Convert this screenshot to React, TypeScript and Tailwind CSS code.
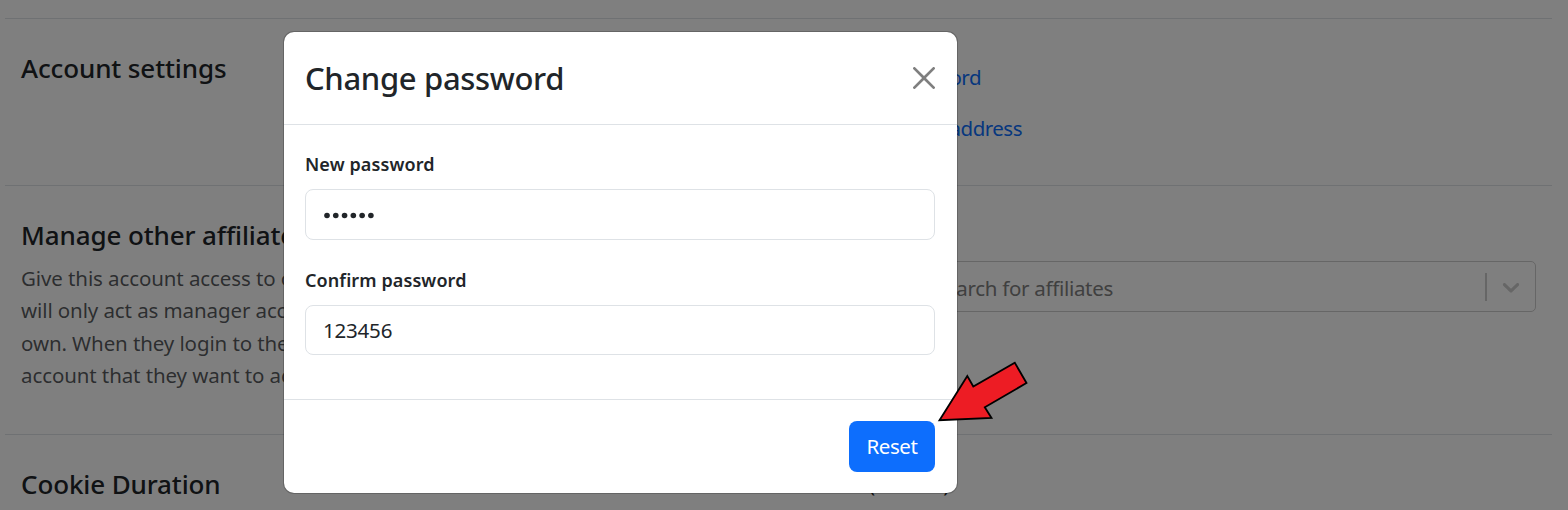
import type { ReactNode } from "react";

function Section({ title, height, description, children }: {
  title: string;
  height: string;
  description?: string[];
  children: ReactNode;
}) {
  return (
    <section className={`flex border-t border-[#dee2e6] pl-4 pr-4 pt-[33px] ${height}`}>
      <div className="w-[799px] shrink-0">
        <h2 className="text-[26px] font-medium leading-8 tracking-[-0.12px]">{title}</h2>
        {description && (
          <p className="mt-[11px] whitespace-nowrap text-[20.5px] leading-[32.3px] tracking-[-0.1px] text-[#212529]/75">
            {description.map((line) => (
              <span key={line} className="block">{line}</span>
            ))}
          </p>
        )}
      </div>
      <div className="flex-1">{children}</div>
    </section>
  );
}

function PasswordField({ label, className, children }: {
  label: string;
  className: string;
  children: ReactNode;
}) {
  return (
    <div>
      <div className="text-[18px] font-semibold leading-6 tracking-[0.1px]">{label}</div>
      <div className={`mt-[13px] flex items-center rounded-lg border border-[#dee2e6] pl-[17px] ${className}`}>
        {children}
      </div>
    </div>
  );
}

function ChangePasswordModal() {
  return (
    <div className="absolute left-[283px] top-[31px] flex h-[463px] w-[675px] flex-col rounded-[11px] border border-black/20 bg-white bg-clip-padding">
      <header className="flex h-[93px] shrink-0 items-center justify-between border-b border-[#dee2e6] pl-[21px] pr-[22px]">
        <h1 className="text-[31px] font-medium leading-[48px] tracking-[-0.33px]">Change password</h1>
        <button aria-label="Close" className="-mt-px text-black/50">
          <svg viewBox="0 0 16 16" className="block size-[22px]" fill="currentColor">
            <path d="M.293.293a1 1 0 0 1 1.414 0L8 6.586 14.293.293a1 1 0 1 1 1.414 1.414L9.414 8l6.293 6.293a1 1 0 0 1-1.414 1.414L8 9.414l-6.293 6.293a1 1 0 0 1-1.414-1.414L6.586 8 .293 1.707a1 1 0 0 1 0-1.414z" />
          </svg>
        </button>
      </header>
      <div className="flex flex-1 flex-col gap-7 pl-[21px] pr-[22px] pt-[27px]">
        <PasswordField label="New password" className="h-[51px]">
          <svg viewBox="0 0 54 8" className="h-2 w-[54px] text-[#212529]" fill="currentColor" aria-label="Password hidden">
            {[0, 1, 2, 3, 4, 5].map((i) => (
              <circle key={i} cx={4 + i * 8.78} cy={4.5} r={2.8} />
            ))}
          </svg>
        </PasswordField>
        <PasswordField label="Confirm password" className="h-[50px]">
          <span className="pt-px text-[20.5px] tracking-[-0.2px]">123456</span>
        </PasswordField>
      </div>
      <footer className="flex h-[94px] shrink-0 items-start justify-end border-t border-[#dee2e6] pr-[22px] pt-[21px]">
        <button className="h-[51px] w-[86px] rounded-lg bg-[#0d6efd] text-[20.5px] tracking-[-0.4px] text-white">
          Reset
        </button>
      </footer>
    </div>
  );
}

export default function App() {
  return (
    <div className="relative h-[510px] w-[1568px] overflow-hidden bg-white font-['Noto_Sans','Open_Sans',sans-serif] text-[#212529]">
      <main className="pl-[5px] pr-4 pt-[18px]">
        <Section title="Account settings" height="h-[167px]">
          <div className="-ml-10 flex flex-col gap-[19px] whitespace-nowrap pt-[9px] text-right text-[20.5px] leading-8 tracking-[-0.5px] text-[#0d6efd]">
            <a className="block w-[201px]">Change password</a>
            <a className="block w-[242px]">Change email address</a>
          </div>
        </Section>
        <Section
          title="Manage other affiliates"
          height="h-[249px]"
          description={[
            "Give this account access to ot",
            "will only act as manager acco",
            "own. When they login to the",
            "account that they want to ac",
          ]}
        >
          <div className="ml-[96px] mt-[42px] flex h-[51px] items-center rounded-[5px] border border-[#ccc] pr-[10px]">
            <span className="w-[196px] whitespace-nowrap pt-[3px] text-right text-[20.5px] tracking-[-0.3px] text-[#808080]">
              Search for affiliates
            </span>
            <span className="ml-auto h-7 w-[2px] bg-[#ccc]" />
            <svg viewBox="0 0 20 20" className="ml-[10px] size-[28px] text-[#ccc]" fill="currentColor">
              <path d="M4.516 7.548c0.436-0.446 1.043-0.481 1.576 0l3.908 3.747 3.908-3.747c0.533-0.481 1.141-0.446 1.574 0 0.436 0.445 0.408 1.197 0 1.615-0.406 0.418-4.695 4.502-4.695 4.502-0.217 0.223-0.502 0.335-0.787 0.335s-0.57-0.112-0.789-0.335c0 0-4.287-4.084-4.695-4.502s-0.436-1.17 0-1.615z" />
            </svg>
          </div>
        </Section>
        <Section title="Cookie Duration" height="h-[120px]">
          <div className="w-[129px] text-right text-[20.5px] leading-8 tracking-[-0.3px]">(Default)</div>
        </Section>
      </main>
      <div className="absolute inset-0 bg-black/50" />
      <ChangePasswordModal />
      <svg viewBox="930 350 110 80" className="absolute left-[930px] top-[350px] h-[80px] w-[110px]">
        <polygon
          points="939.5,420.2 967.3,376 973.3,386.5 1014.8,362.8 1026.5,383 984.8,407.3 991.5,418"
          fill="#ed1c24"
          stroke="#000"
          strokeWidth="1.8"
        />
      </svg>
    </div>
  );
}
